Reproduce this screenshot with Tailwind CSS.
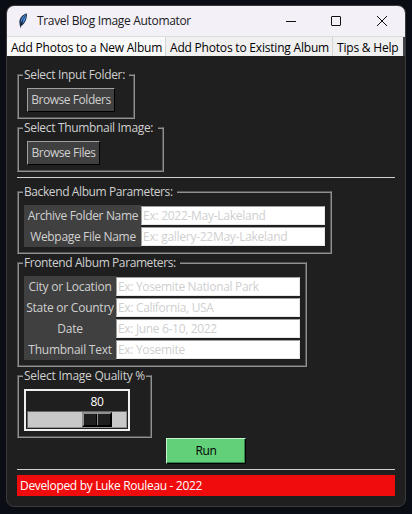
<!DOCTYPE html>
<html lang="en">
<head>
<meta charset="utf-8">
<title>Travel Blog Image Automator</title>
<script src="https://cdn.jsdelivr.net/npm/@tailwindcss/browser@4"></script>
</head>
<body class="h-[514px] w-[412px] overflow-hidden bg-[#0a0e14] pl-[6px] pt-[5px] font-['Open_Sans','Noto_Sans',sans-serif] text-[12px] leading-[16px] whitespace-nowrap">
<main class="flex h-[502px] w-[400px] flex-col overflow-hidden rounded-[8px] border border-[#3a3a3d] bg-[#1f1f1f]">
  <header class="flex h-[30px] shrink-0 items-center bg-[#f3f0f8] pl-[11px] text-[#1a1a1a]">
    <svg class="h-[16px] w-[10px]" viewBox="0 0 10 16"><path d="M8.8 .4C5 1 1.8 4.5 1.3 8.5L1.8 12.5 3 15.5 3.2 12.8C6.7 11 9.5 5.5 8.8 .4Z" fill="#17283f"/><path d="M8 1.5C5 2.5 2.7 5.5 2.5 10L5 6.5 4 11C7 8.5 8.3 5 8 1.5Z" fill="#4b8de0"/><path d="M7.4 2.4Q4.5 6 3 13" stroke="#16263d" stroke-width=".7" fill="none"/></svg>
    <span class="ml-[9px] w-[158px] tracking-[-0.33px]">Travel Blog Image Automator</span>
    <svg class="ml-[91px] h-[12px] w-[104px]" viewBox="0 0 104 12" fill="none" stroke="#111"><path d="M0 6.5H10"/><rect x="45.5" y="1.5" width="9" height="9" rx=".5"/><path d="M91 1L101 11M101 1L91 11"/></svg>
  </header>
  <nav class="flex h-[20px] shrink-0 border-t border-[#dcdcdc] bg-[#414448] leading-[22px] text-black">
    <span class="w-[158px] bg-[#fafafa] pl-[4px] tracking-[-0.22px]">Add Photos to a New Album</span>
    <span class="w-[167px] border-l border-[#d5d5d5] bg-[#f0f0f0] pl-[4px] tracking-[-0.2px]">Add Photos to Existing Album</span>
    <span class="w-[71px] border-l border-[#d5d5d5] bg-[#f0f0f0] pl-[4px] tracking-[-0.2px]">Tips &amp; Help</span>
  </nav>
  <div class="flex flex-col items-start pl-[10px] pt-[18px] tracking-[-0.33px] text-[#d0d0d0]">
    <section class="h-[45px] w-[118px] border border-t-[#555] border-r-[#909090] border-b-[#909090] border-l-[#555] shadow-[inset_1px_1px_#909090,inset_-1px_-1px_#555]">
      <h2 class="-mt-[8px] ml-[5px] h-[16px] w-[106px] bg-[#1f1f1f] pl-px">Select Input Folder:</h2>
      <button class="mt-[5px] ml-[9px] block h-[24px] w-[88px] border border-t-[#a0a0a0] border-r-black border-b-black border-l-[#a0a0a0] bg-[#404040] tracking-[-0.45px]">Browse Folders</button>
    </section>
    <section class="mt-[8px] h-[45px] w-[147px] border border-t-[#555] border-r-[#909090] border-b-[#909090] border-l-[#555] shadow-[inset_1px_1px_#909090,inset_-1px_-1px_#555]">
      <h2 class="-mt-[8px] ml-[5px] h-[16px] w-[135px] bg-[#1f1f1f] pl-px">Select Thumbnail Image:</h2>
      <button class="mt-[5px] ml-[9px] block h-[24px] w-[73px] border border-t-[#a0a0a0] border-r-black border-b-black border-l-[#a0a0a0] bg-[#404040] tracking-[-0.45px]">Browse Files</button>
    </section>
    <div class="mt-[5px] h-px w-[378px] bg-[#d0d0d0]"></div>
    <section class="mt-[13px] h-[63px] w-[315px] border border-t-[#555] border-r-[#909090] border-b-[#909090] border-l-[#555] shadow-[inset_1px_1px_#909090,inset_-1px_-1px_#555]">
      <h2 class="-mt-[8px] ml-[5px] h-[16px] w-[154px] bg-[#1f1f1f] pl-px tracking-[-0.4px]">Backend Album Parameters:</h2>
      <div class="mt-[5px] ml-[6px] flex">
        <div class="w-[117px] bg-[#404040] pl-px text-center leading-[21px]"><p>Archive Folder Name</p><p>Webpage File Name</p></div>
        <div class="flex w-[184px] flex-col gap-[2px] pt-px leading-[18px] tracking-[-0.27px] text-[#cfcfcf]"><p class="h-[19px] border border-t-[#a0a0a0] border-r-[#e8e8e8] border-b-[#e8e8e8] border-l-[#a0a0a0] bg-white pl-px">Ex: 2022-May-Lakeland</p><p class="h-[19px] border border-t-[#a0a0a0] border-r-[#e8e8e8] border-b-[#e8e8e8] border-l-[#a0a0a0] bg-white pl-px">Ex: gallery-22May-Lakeland</p></div>
      </div>
    </section>
    <section class="mt-[8px] h-[105px] w-[290px] border border-t-[#555] border-r-[#909090] border-b-[#909090] border-l-[#555] shadow-[inset_1px_1px_#909090,inset_-1px_-1px_#555]">
      <h2 class="-mt-[8px] ml-[5px] h-[16px] w-[157px] bg-[#1f1f1f] pl-px tracking-[-0.4px]">Frontend Album Parameters:</h2>
      <div class="mt-[5px] ml-[6px] flex">
        <div class="w-[92px] bg-[#404040] text-center leading-[21px] tracking-[-0.25px]"><p>City or Location</p><p>State or Country</p><p>Date</p><p>Thumbnail Text</p></div>
        <div class="flex w-[184px] flex-col gap-[2px] pt-px leading-[18px] text-[#cfcfcf]"><p class="h-[19px] border border-t-[#a0a0a0] border-r-[#e8e8e8] border-b-[#e8e8e8] border-l-[#a0a0a0] bg-white pl-px">Ex: Yosemite National Park</p><p class="h-[19px] border border-t-[#a0a0a0] border-r-[#e8e8e8] border-b-[#e8e8e8] border-l-[#a0a0a0] bg-white pl-px">Ex: California, USA</p><p class="h-[19px] border border-t-[#a0a0a0] border-r-[#e8e8e8] border-b-[#e8e8e8] border-l-[#a0a0a0] bg-white pl-px">Ex: June 6-10, 2022</p><p class="h-[19px] border border-t-[#a0a0a0] border-r-[#e8e8e8] border-b-[#e8e8e8] border-l-[#a0a0a0] bg-white pl-px">Ex: Yosemite</p></div>
      </div>
    </section>
    <section class="mt-[8px] h-[63px] w-[135px] border border-t-[#555] border-r-[#909090] border-b-[#909090] border-l-[#555] shadow-[inset_1px_1px_#909090,inset_-1px_-1px_#555]">
      <h2 class="-mt-[8px] ml-[5px] h-[16px] w-[123px] bg-[#1f1f1f] pl-px tracking-[-0.25px]">Select Image Quality %</h2>
      <div class="mt-[5px] ml-[6px] h-[42px] w-[106px] border-2 border-[#f0f0f0] pt-[2px] pl-px">
        <div class="ml-[55px] h-[18px] w-[30px] text-center leading-[17px] text-white">80</div>
        <div class="h-[17px] w-[100px] border border-t-[#666] border-r-[#909090] border-b-[#909090] border-l-[#666] bg-[#c8c8c8] pl-[54px]">
          <div class="flex h-[15px] w-[30px] border-2 border-t-[#909090] border-r-black border-b-black border-l-[#909090] bg-[#1f1f1f] pl-[12px]"><i class="w-px bg-black"></i><i class="w-px bg-[#909090]"></i></div>
        </div>
      </div>
    </section>
    <button class="ml-[149px] h-[26px] w-[80px] border border-t-[#c4f5cf] border-r-black border-b-black border-l-[#c4f5cf] bg-[#62d078] text-black shadow-[inset_-1px_-1px_#35864a]">Run</button>
    <div class="mt-[5px] h-px w-[378px] bg-[#d0d0d0]"></div>
    <footer class="mt-[5px] h-[21px] w-[378px] bg-[#f00c0c] pl-[3px] leading-[21px] text-white">Developed by Luke Rouleau - 2022</footer>
  </div>
</main>
</body>
</html>
